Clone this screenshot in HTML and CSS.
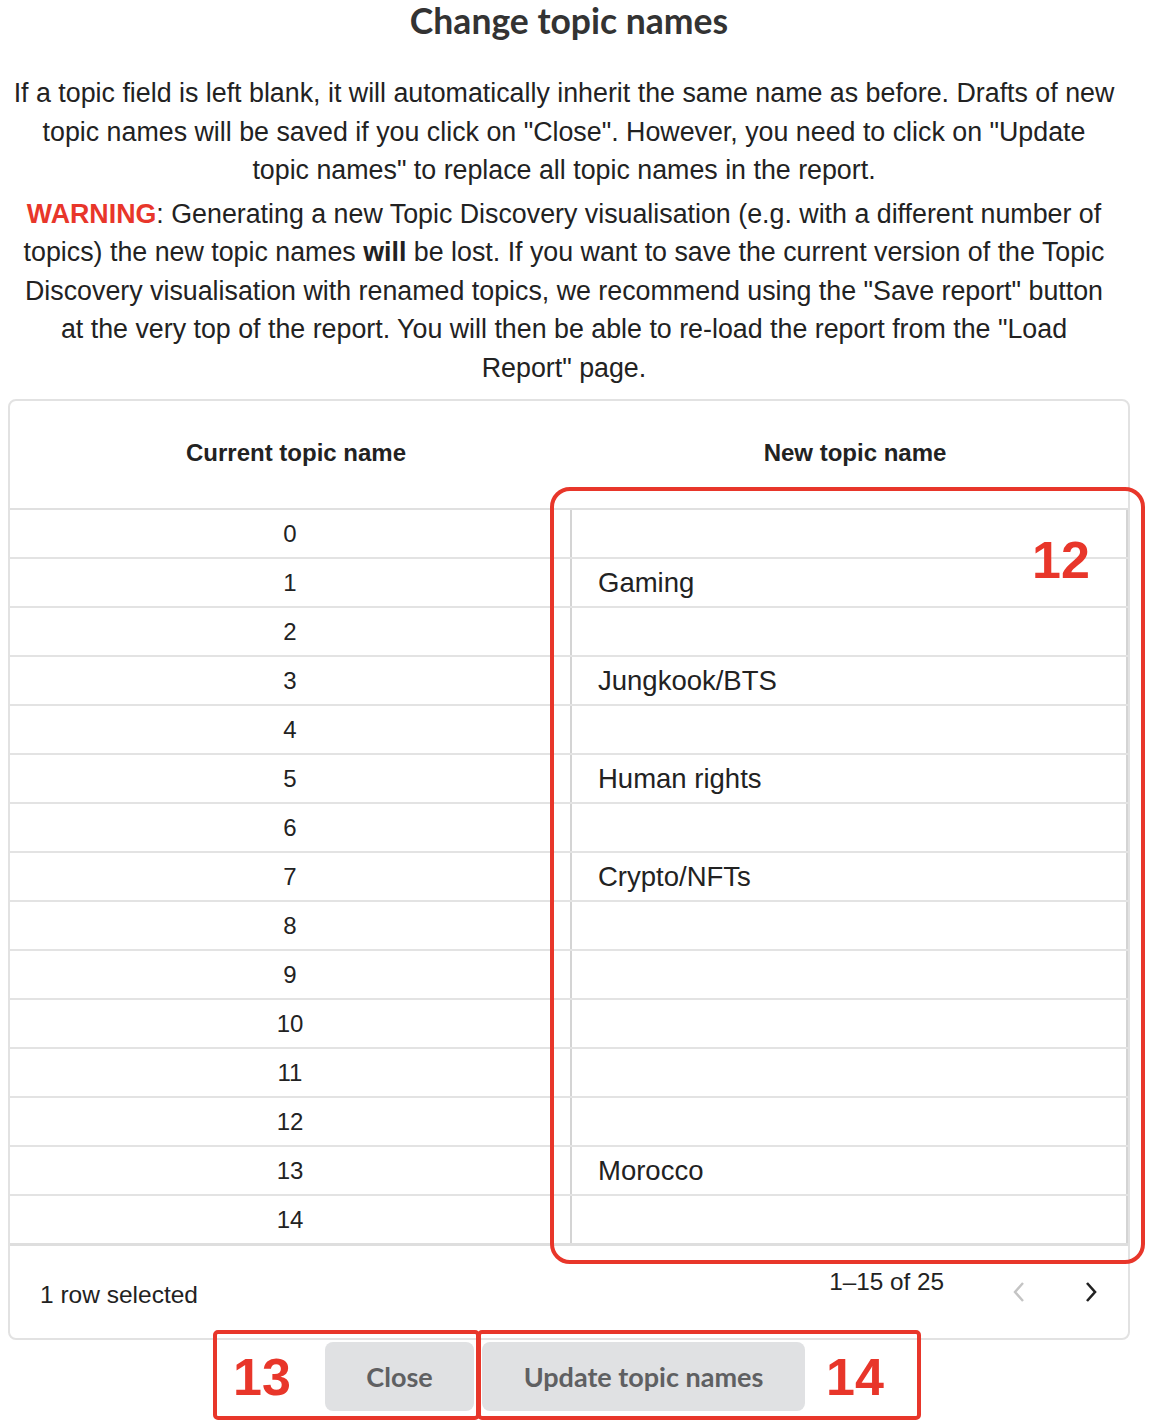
FILE: index.html
```html
<!DOCTYPE html>
<html>
<head>
<meta charset="utf-8">
<link rel="stylesheet" href="styles.css">
</head>
<body>
<div class="page">
  <h1 class="title">Change topic names</h1>
  <p class="intro">If a topic field is left blank, it will automatically inherit the same name as before. Drafts of new topic names will be saved if you click on "Close". However, you need to click on "Update topic names" to replace all topic names in the report.</p>
  <p class="warn"><span class="warn-label">WARNING</span>: Generating a new Topic Discovery visualisation (e.g. with a different number of topics) the new topic names <b>will</b> be lost. If you want to save the current version of the Topic Discovery visualisation with renamed topics, we recommend using the "Save report" button at the very top of the report. You will then be able to re-load the report from the "Load Report" page.</p>

  <div class="card">
    <div class="head">
      <div class="hcell">Current topic name</div>
      <div class="hcell">New topic name</div>
    </div>
    <div class="body">
      <div class="row"><div class="cur">0</div><div class="new"></div></div>
      <div class="row"><div class="cur">1</div><div class="new">Gaming</div></div>
      <div class="row"><div class="cur">2</div><div class="new"></div></div>
      <div class="row"><div class="cur">3</div><div class="new">Jungkook/BTS</div></div>
      <div class="row"><div class="cur">4</div><div class="new"></div></div>
      <div class="row"><div class="cur">5</div><div class="new">Human rights</div></div>
      <div class="row"><div class="cur">6</div><div class="new"></div></div>
      <div class="row"><div class="cur">7</div><div class="new">Crypto/NFTs</div></div>
      <div class="row"><div class="cur">8</div><div class="new"></div></div>
      <div class="row"><div class="cur">9</div><div class="new"></div></div>
      <div class="row"><div class="cur">10</div><div class="new"></div></div>
      <div class="row"><div class="cur">11</div><div class="new"></div></div>
      <div class="row"><div class="cur">12</div><div class="new"></div></div>
      <div class="row"><div class="cur">13</div><div class="new">Morocco</div></div>
      <div class="row last"><div class="cur">14</div><div class="new"></div></div>
    </div>
    <div class="foot">
      <div class="selected">1 row selected</div>
      <div class="pager">
        <span class="range">1–15 of 25</span>
        <svg class="chev prev" width="14" height="22" viewBox="0 0 14 22"><path d="M11 2 L3 11 L11 20" fill="none" stroke="#c4c4c4" stroke-width="2.4"/></svg>
        <svg class="chev next" width="14" height="22" viewBox="0 0 14 22"><path d="M3 2 L11 11 L3 20" fill="none" stroke="#222" stroke-width="2.6"/></svg>
      </div>
    </div>
    <div class="anno anno12"><span class="num n12">12</span></div>
  </div>

  <div class="actions">
    <div class="btn-close">Close</div>
    <div class="btn-update">Update topic names</div>
    <div class="anno anno13"><span class="num n13">13</span></div>
    <div class="anno anno14"><span class="num n14">14</span></div>
  </div>
</div>
</body>
</html>
```

FILE: styles.css
```css
html, body { margin: 0; padding: 0; background: #fff; }
.page {
  width: 1122px;
  padding: 0 0 40px 8px;
  font-family: "Liberation Sans", Arial, sans-serif;
  color: #222;
}
.title {
  margin: 0;
  font-family: Lato, "Liberation Sans", sans-serif;
  font-weight: 700;
  font-size: 35.5px;
  line-height: 42px;
  text-align: center;
  color: #333;
}
.intro, .warn {
  margin: 0;
  text-align: center;
  font-size: 26.8px;
  line-height: 38.5px;
  color: #222;
  padding: 0 15px 0 5px;
}
.intro { margin-top: 32px; }
.warn { margin-top: 5px; }
.warn-label { color: #e8362a; font-weight: 700; }
.warn b { font-weight: 700; }

.card {
  position: relative;
  margin-top: 12px;
  width: 1118px;
  border: 2px solid #e2e2e2;
  border-radius: 8px;
}
.head {
  display: grid;
  grid-template-columns: 560px 558px;
  height: 107px;
  border-bottom: 2px solid #e0e0e0;
}
.hcell {
  display: flex;
  align-items: center;
  justify-content: center;
  font-weight: 700;
  font-size: 24px;
  color: #222;
  padding-left: 12px;
  padding-bottom: 3px;
}
.row {
  display: grid;
  grid-template-columns: 560px 558px;
  height: 47px;
  border-bottom: 2px solid #e3e3e3;
}
.row.last { border-bottom: 3px solid #dedede; }
.cur {
  display: flex;
  align-items: center;
  justify-content: center;
  font-size: 24px;
  color: #222;
}
.new {
  display: flex;
  align-items: center;
  padding-left: 26px;
  font-size: 27.5px;
  color: #222;
  border-left: 2px solid #d4d4d4;
  border-right: 2px solid #d4d4d4;
}
.foot {
  height: 92px;
  display: flex;
  justify-content: space-between;
}
.selected {
  font-size: 24.5px;
  padding-left: 30px;
  padding-top: 35px;
  color: #222;
}
.pager {
  display: flex;
  align-items: flex-start;
  padding-top: 22px;
  padding-right: 30px;
}
.range { font-size: 24.3px; color: #222; margin-right: 68px; }
.chev { margin-top: 13px; }
.chev.prev { margin-right: 58px; }

.actions {
  position: relative;
  display: flex;
  justify-content: center;
  gap: 8px;
  padding-top: 2px;
  padding-right: 8px;
  width: 1114px;
}
.btn-close, .btn-update {
  height: 69px;
  display: flex;
  align-items: center;
  justify-content: center;
  background: #e0e1e3;
  border-radius: 8px;
  font-family: Lato, "Liberation Sans", sans-serif;
  font-weight: 700;
  font-size: 27px;
  color: #5f6062;
}
.btn-close { width: 149px; }
.btn-update { width: 323px; }

.anno {
  position: absolute;
  border: 4px solid #e8362a;
  box-sizing: border-box;
}
.num {
  position: absolute;
  font-weight: 700;
  font-size: 52px;
  line-height: 1;
  color: #e8362a;
}
.anno12 {
  left: 540px;
  top: 86px;
  width: 595px;
  height: 777px;
  border-radius: 20px;
}
.n12 { left: 478px; top: 43px; }
.anno13 {
  left: 205px;
  top: -10px;
  width: 267px;
  height: 90px;
  border-radius: 5px;
}
.n13 { left: 16px; top: 17px; }
.anno14 {
  left: 469px;
  top: -10px;
  width: 444px;
  height: 90px;
  border-radius: 5px;
}
.n14 { left: 345px; top: 17px; }
```
